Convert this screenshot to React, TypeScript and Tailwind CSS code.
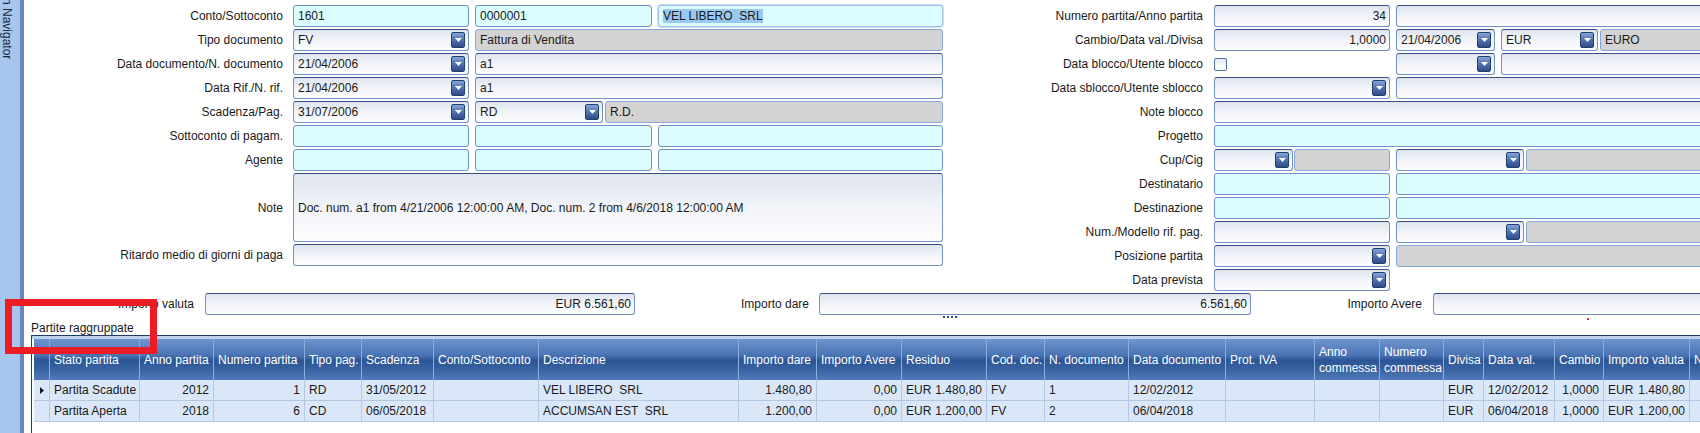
import React from "react";

type Kind = "cyan" | "white" | "gray" | "focus";

const kindCls: Record<Kind, string> = {
  cyan: "border border-[#6f8fc6] bg-[#dcfdfd]",
  white:
    "border border-[#7391c6] border-t-[#34507f] bg-[linear-gradient(to_bottom,#dfe4ee_0%,#f3f5f9_55%,#fdfdfe_100%)]",
  gray: "border border-[#86a6d8] bg-[#d3d3d3]",
  focus: "border border-[#9fc0ea] bg-[#dcfdfd] shadow-[0_0_0_1px_#cfe0f6]",
};

function Box({
  kind = "white",
  className = "",
  children,
  right = false,
}: {
  kind?: Kind;
  className?: string;
  children?: React.ReactNode;
  right?: boolean;
}) {
  return (
    <div
      className={`h-[22px] shrink-0 rounded-[3px] flex items-center px-[4px] whitespace-pre overflow-hidden ${
        right ? "justify-end pr-[3px]" : ""
      } ${kindCls[kind]} ${className}`}
    >
      {children}
    </div>
  );
}

function Btn() {
  return (
    <div className="shrink-0 w-[14px] h-[16px] rounded-[2px] border border-[#21406e] bg-[linear-gradient(to_bottom,#86a4d6_0%,#5475b0_45%,#2d4e88_100%)] flex items-center justify-center">
      <svg width="7" height="4" viewBox="0 0 7 4">
        <path d="M0 0H7L3.5 4Z" fill="white" />
      </svg>
    </div>
  );
}

function Drop({
  text = "",
  className = "",
}: {
  text?: string;
  className?: string;
}) {
  return (
    <div
      className={`h-[22px] shrink-0 rounded-[3px] flex items-center pl-[4px] pr-[3px] ${kindCls.white} ${className}`}
    >
      <span className="flex-1 whitespace-pre overflow-hidden">{text}</span>
      <Btn />
    </div>
  );
}

function LRow({
  label,
  children,
  tall = false,
}: {
  label: string;
  children: React.ReactNode;
  tall?: boolean;
}) {
  return (
    <div className={`flex items-center gap-[10px] ${tall ? "h-[69px]" : "h-[22px]"}`}>
      <div className="w-[259px] shrink-0 text-right whitespace-nowrap">{label}</div>
      <div className="w-[650px] shrink-0 flex items-center gap-[6px] h-full">{children}</div>
    </div>
  );
}

function RRow({ label, children }: { label: string; children: React.ReactNode }) {
  return (
    <div className="flex items-center gap-[11px] h-[22px]">
      <div className="w-[260px] shrink-0 text-right whitespace-nowrap">{label}</div>
      <div className="w-[506px] shrink-0 flex items-center gap-[6px]">{children}</div>
    </div>
  );
}

const cols =
  "grid grid-cols-[16px_90px_74px_91px_57px_72px_105px_200px_78px_85px_85px_58px_84px_97px_89px_65px_64px_40px_71px_49px_86px_80px]";

const headers: React.ReactNode[] = [
  "",
  "Stato partita",
  "Anno partita",
  "Numero partita",
  "Tipo pag.",
  "Scadenza",
  "Conto/Sottoconto",
  "Descrizione",
  "Importo dare",
  "Importo Avere",
  "Residuo",
  "Cod. doc.",
  "N. documento",
  "Data documento",
  "Prot. IVA",
  <>
    Anno
    <br />
    commessa
  </>,
  <>
    Numero
    <br />
    commessa
  </>,
  "Divisa",
  "Data val.",
  "Cambio",
  "Importo valuta",
  "N",
];

type Cell = { t?: string; r?: boolean; pair?: [string, string] };

const rows: Cell[][] = [
  [
    {},
    { t: "Partita Scadute" },
    { t: "2012", r: true },
    { t: "1", r: true },
    { t: "RD" },
    { t: "31/05/2012" },
    {},
    { t: "VEL LIBERO  SRL" },
    { t: "1.480,80", r: true },
    { t: "0,00", r: true },
    { pair: ["EUR", "1.480,80"] },
    { t: "FV" },
    { t: "1" },
    { t: "12/02/2012" },
    {},
    {},
    {},
    { t: "EUR" },
    { t: "12/02/2012" },
    { t: "1,0000", r: true },
    { pair: ["EUR", "1.480,80"] },
    {},
  ],
  [
    {},
    { t: "Partita Aperta" },
    { t: "2018", r: true },
    { t: "6", r: true },
    { t: "CD" },
    { t: "06/05/2018" },
    {},
    { t: "ACCUMSAN EST  SRL" },
    { t: "1.200,00", r: true },
    { t: "0,00", r: true },
    { pair: ["EUR", "1.200,00"] },
    { t: "FV" },
    { t: "2" },
    { t: "06/04/2018" },
    {},
    {},
    {},
    { t: "EUR" },
    { t: "06/04/2018" },
    { t: "1,0000", r: true },
    { pair: ["EUR", "1.200,00"] },
    {},
  ],
];

export default function App() {
  return (
    <div className="relative w-[1700px] h-[433px] overflow-hidden bg-white flex font-['Liberation_Sans',Arial,sans-serif] text-[12px] leading-[14px] text-[#1a1a1a]">
      {/* side strip */}
      <div className="w-[24px] shrink-0 h-full bg-[#a8c5ed] border-r-[4px] border-[#6788be] overflow-hidden">
        <div className="[writing-mode:vertical-rl] mt-[-2px] text-[#1b2940] whitespace-nowrap text-[12px]">
          n Navigator
        </div>
      </div>

      <div className="flex-1 min-w-0 flex flex-col overflow-hidden">
        {/* top form */}
        <div className="flex pt-[5px]">
          <div className="w-[919px] shrink-0 flex flex-col gap-[2px]">
            <LRow label="Conto/Sottoconto">
              <Box kind="cyan" className="w-[176px]">1601</Box>
              <Box kind="cyan" className="w-[177px]">0000001</Box>
              <Box kind="focus" className="w-[285px]">
                <span className="bg-[#99c9ef]">VEL LIBERO  SRL</span>
              </Box>
            </LRow>
            <LRow label="Tipo documento">
              <Drop text="FV" className="w-[176px]" />
              <Box kind="gray" className="w-[468px]">Fattura di Vendita</Box>
            </LRow>
            <LRow label="Data documento/N. documento">
              <Drop text="21/04/2006" className="w-[176px]" />
              <Box className="w-[468px]">a1</Box>
            </LRow>
            <LRow label="Data Rif./N. rif.">
              <Drop text="21/04/2006" className="w-[176px]" />
              <Box className="w-[468px]">a1</Box>
            </LRow>
            <LRow label="Scadenza/Pag.">
              <Drop text="31/07/2006" className="w-[176px]" />
              <div className="flex gap-[2px]">
                <Drop text="RD" className="w-[128px]" />
                <Box kind="gray" className="w-[338px]">R.D.</Box>
              </div>
            </LRow>
            <LRow label="Sottoconto di pagam.">
              <Box kind="cyan" className="w-[176px]" />
              <Box kind="cyan" className="w-[177px]" />
              <Box kind="cyan" className="w-[285px]" />
            </LRow>
            <LRow label="Agente">
              <Box kind="cyan" className="w-[176px]" />
              <Box kind="cyan" className="w-[177px]" />
              <Box kind="cyan" className="w-[285px]" />
            </LRow>
            <LRow label="Note" tall>
              <div
                className={`w-[650px] h-[69px] rounded-[3px] flex items-center px-[4px] whitespace-pre ${kindCls.white}`}
              >
                Doc. num. a1 from 4/21/2006 12:00:00 AM, Doc. num. 2 from 4/6/2018 12:00:00 AM
              </div>
            </LRow>
            <LRow label="Ritardo medio di giorni di paga">
              <Box className="w-[650px]" />
            </LRow>
          </div>

          <div className="w-[777px] shrink-0 flex flex-col gap-[2px]">
            <RRow label="Numero partita/Anno partita">
              <Box right className="w-[176px]">34</Box>
              <Box className="flex-1" />
            </RRow>
            <RRow label="Cambio/Data val./Divisa">
              <Box right className="w-[176px]">1,0000</Box>
              <Drop text="21/04/2006" className="w-[99px]" />
              <div className="flex-1 flex gap-[2px]">
                <Drop text="EUR" className="w-[97px]" />
                <Box kind="gray" className="flex-1">EURO</Box>
              </div>
            </RRow>
            <RRow label="Data blocco/Utente blocco">
              <div className="w-[176px] shrink-0 flex items-center">
                <div className="w-[13px] h-[13px] rounded-[2px] border border-[#4f6f9f] bg-[linear-gradient(to_bottom,#e9edf4,#ffffff)]" />
              </div>
              <Drop className="w-[99px]" />
              <Box className="flex-1" />
            </RRow>
            <RRow label="Data sblocco/Utente sblocco">
              <Drop className="w-[176px]" />
              <Box className="flex-1" />
            </RRow>
            <RRow label="Note blocco">
              <Box className="flex-1" />
            </RRow>
            <RRow label="Progetto">
              <Box kind="cyan" className="flex-1" />
            </RRow>
            <RRow label="Cup/Cig">
              <div className="w-[176px] shrink-0 flex gap-[1px]">
                <Drop className="w-[79px]" />
                <Box kind="gray" className="flex-1" />
              </div>
              <div className="flex-1 flex gap-[2px]">
                <Drop className="w-[128px]" />
                <Box kind="gray" className="flex-1" />
              </div>
            </RRow>
            <RRow label="Destinatario">
              <Box kind="cyan" className="w-[176px]" />
              <Box kind="cyan" className="flex-1" />
            </RRow>
            <RRow label="Destinazione">
              <Box kind="cyan" className="w-[176px]" />
              <Box kind="cyan" className="flex-1" />
            </RRow>
            <RRow label="Num./Modello rif. pag.">
              <Box className="w-[176px]" />
              <div className="flex-1 flex gap-[2px]">
                <Drop className="w-[128px]" />
                <Box kind="gray" className="flex-1" />
              </div>
            </RRow>
            <RRow label="Posizione partita">
              <Drop className="w-[176px]" />
              <Box kind="gray" className="flex-1" />
            </RRow>
            <RRow label="Data prevista">
              <Drop className="w-[176px]" />
            </RRow>
          </div>
        </div>

        {/* importo row */}
        <div className="flex items-center mt-[2px] h-[22px] w-[1696px] shrink-0">
          <div className="w-[170px] shrink-0 text-right">Importo valuta</div>
          <Box right className="w-[430px] ml-[11px]">EUR 6.561,60</Box>
          <div className="w-[174px] shrink-0 text-right">Importo dare</div>
          <div className="relative ml-[10px]">
            <Box right className="w-[432px]">6.561,60</Box>
            <div className="absolute left-[124px] top-[23px] flex gap-[2px]">
              <div className="w-[2px] h-[2px] bg-[#2b4f86]" />
              <div className="w-[2px] h-[2px] bg-[#2b4f86]" />
              <div className="w-[2px] h-[2px] bg-[#2b4f86]" />
              <div className="w-[2px] h-[2px] bg-[#2b4f86]" />
            </div>
          </div>
          <div className="w-[171px] shrink-0 text-right">Importo Avere</div>
          <div className="relative ml-[11px]">
            <Box className="w-[300px]" />
            <div className="absolute left-[154px] top-[25px] w-[2px] h-[2px] bg-[#e8283a]" />
          </div>
        </div>

        {/* grouped */}
        <div className="mt-[6px] h-[14px] pl-[7px] leading-[14px] shrink-0">Partite raggruppate</div>

        <div className="ml-[7px] flex-1 border-t border-l border-[#1f3c68] pt-[3px] pl-[2px] bg-[linear-gradient(to_bottom,#bcd2ef_0px,#bcd2ef_3px,#ffffff_3px)] overflow-hidden">
          <div className={`${cols} h-[41px] w-max bg-[linear-gradient(to_bottom,#6f96d0_0%,#4a73b4_40%,#2c5596_52%,#36609f_70%,#5179b9_100%)] text-white`}>
            {headers.map((h, i) => (
              <div
                key={i}
                className="border-r border-[#8cafe0] px-[4px] flex items-center whitespace-nowrap overflow-hidden leading-[16px]"
              >
                {h}
              </div>
            ))}
          </div>
          {rows.map((row, ri) => (
            <div key={ri} className={`${cols} h-[21px] w-max`}>
              {row.map((c, ci) => (
                <div
                  key={ci}
                  className={`border-r border-b border-[#b3c7e3] bg-[#dae7f8] px-[4px] flex items-center whitespace-pre overflow-hidden ${
                    c.r ? "justify-end" : ""
                  } ${c.pair ? "justify-between" : ""}`}
                >
                  {ci === 0 && ri === 0 ? (
                    <svg width="4" height="7" viewBox="0 0 4 7" className="ml-[2px]">
                      <path d="M0 0L4 3.5L0 7Z" fill="#1a1a1a" />
                    </svg>
                  ) : null}
                  {c.pair ? (
                    <>
                      <span>{c.pair[0]}</span>
                      <span>{c.pair[1]}</span>
                    </>
                  ) : (
                    c.t
                  )}
                </div>
              ))}
            </div>
          ))}
        </div>
      </div>

      {/* red annotation box */}
      <div className="absolute left-[5px] top-[299px] w-[152px] h-[55px] border-[7px] border-[#ec1c24] pointer-events-none" />
    </div>
  );
}
